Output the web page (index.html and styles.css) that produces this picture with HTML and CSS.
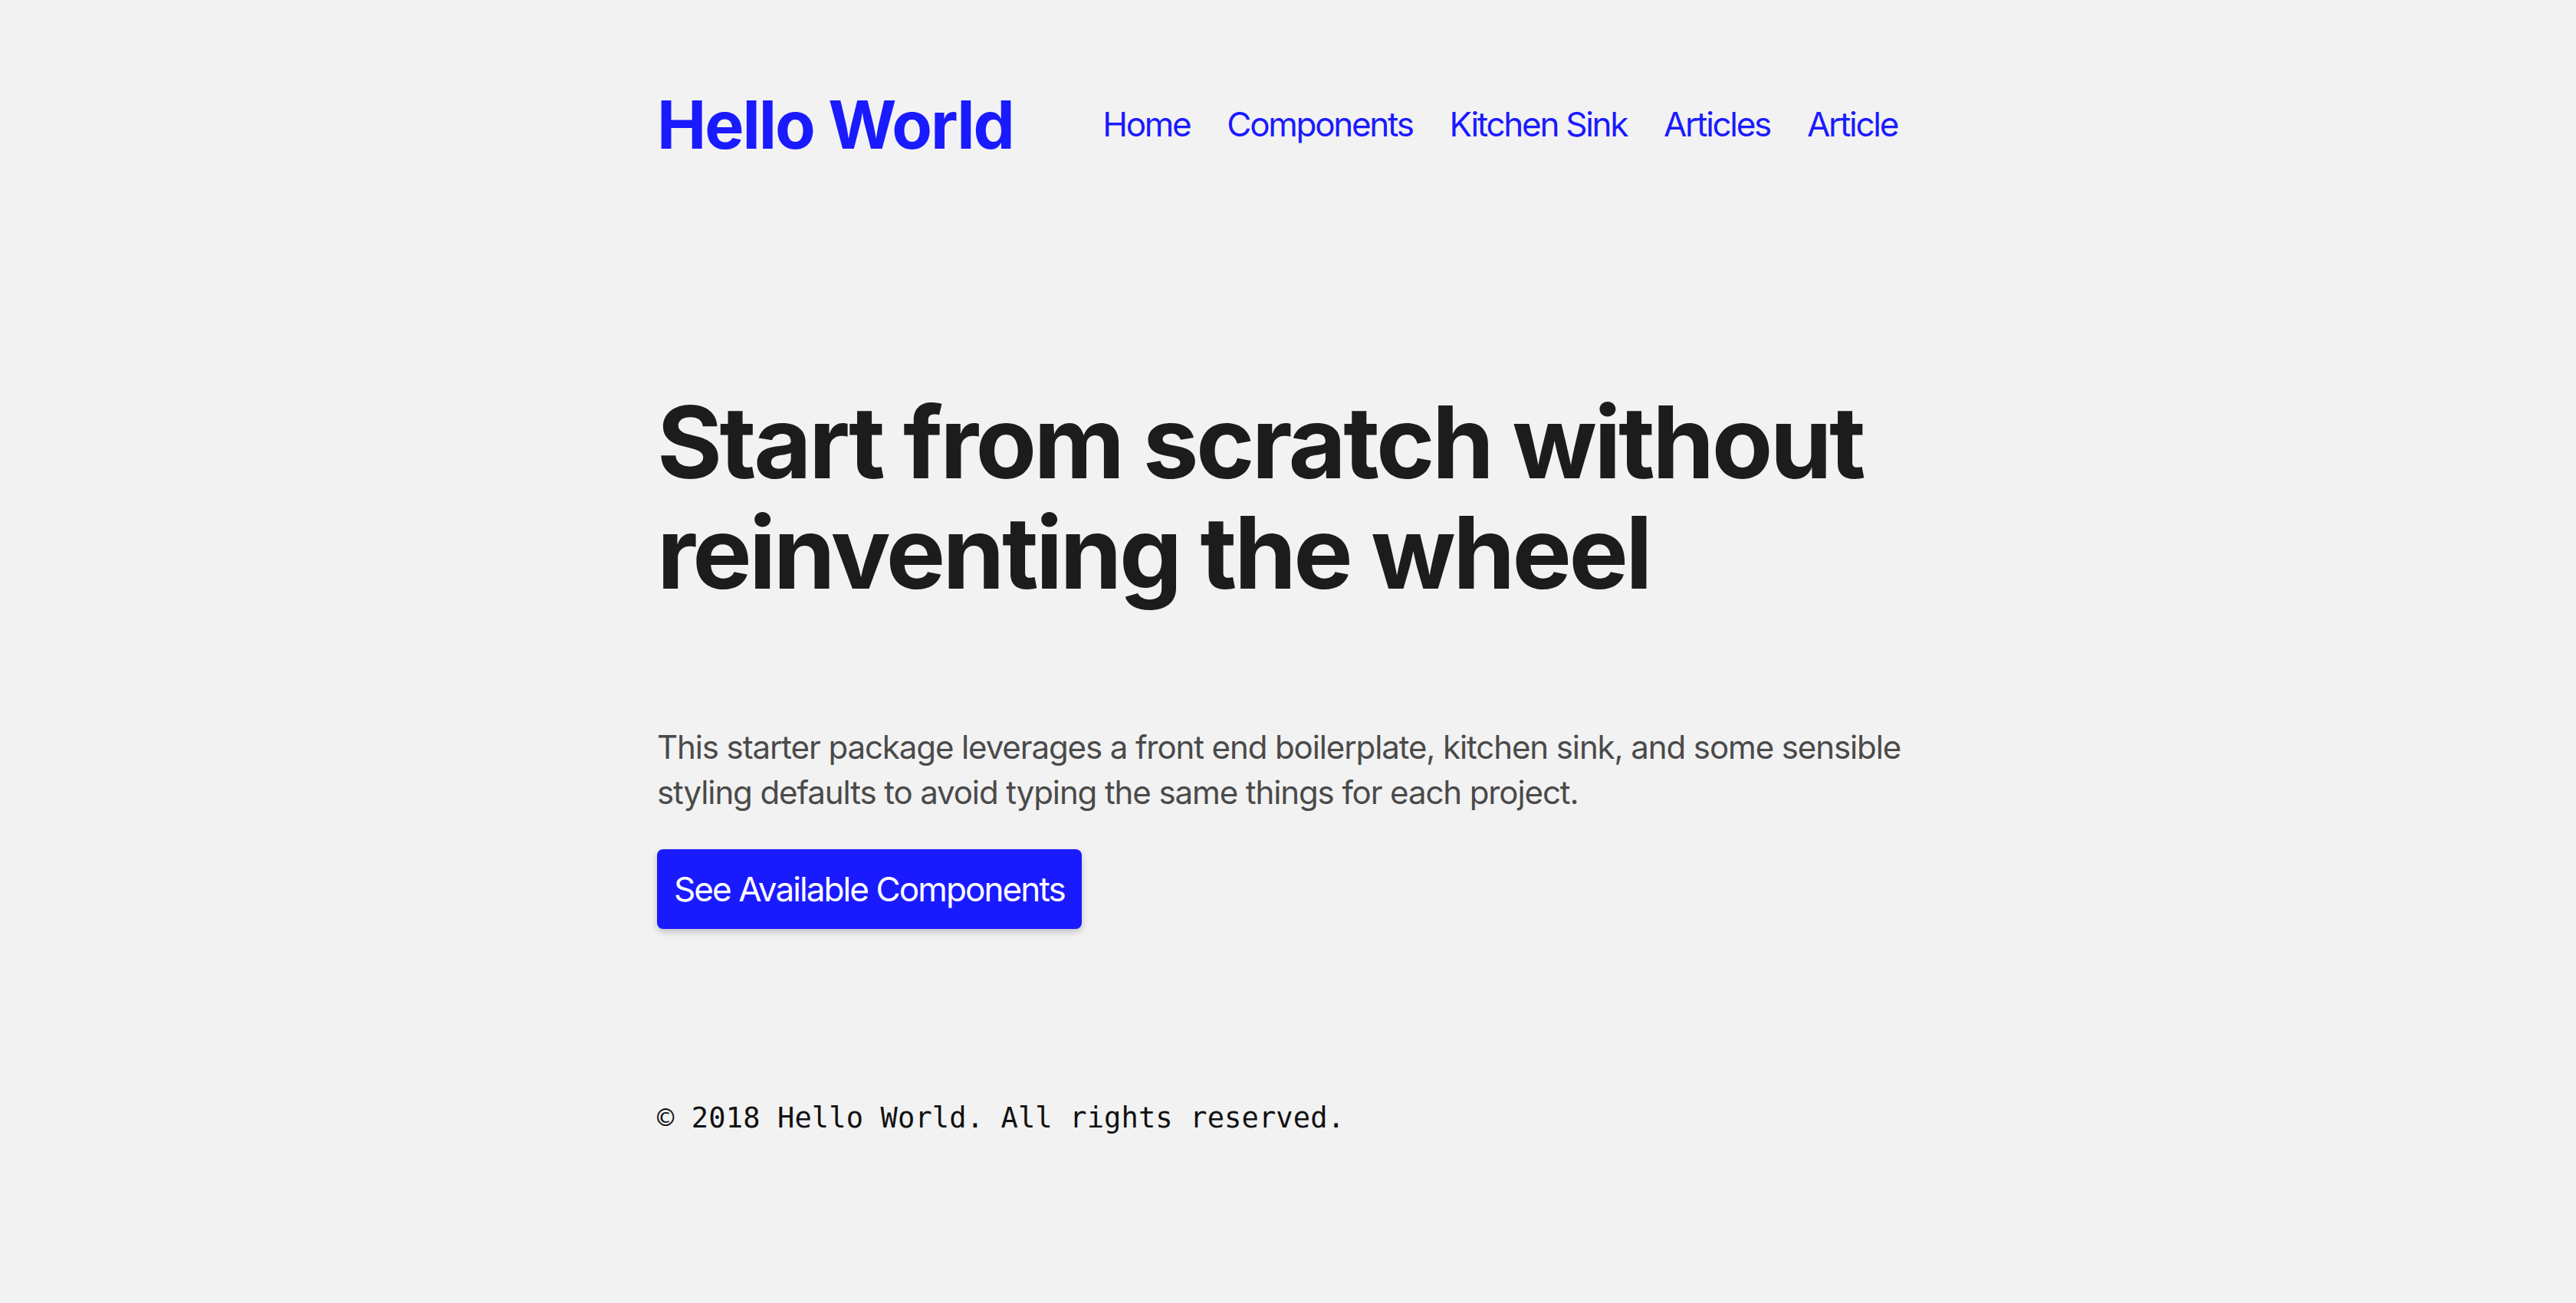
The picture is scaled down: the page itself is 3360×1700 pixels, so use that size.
FILE: index.html
```html
<!DOCTYPE html>
<html lang="en">
<head>
<meta charset="utf-8">
<title>Hello World</title>
<link rel="stylesheet" href="styles.css">
</head>
<body>
<div class="page">
  <header class="site-header">
    <a class="logo" href="#">Hello World</a>
    <nav class="nav">
      <a href="#">Home</a>
      <a href="#">Components</a>
      <a href="#">Kitchen Sink</a>
      <a href="#">Articles</a>
      <a href="#">Article</a>
    </nav>
  </header>
  <main class="hero">
    <h1 class="hero-title">Start from scratch without reinventing the wheel</h1>
    <p class="hero-text">This starter package leverages a front end boilerplate, kitchen sink, and some sensible styling defaults to avoid typing the same things for each project.</p>
    <div><a class="button" href="#">See Available Components</a></div>
  </main>
  <footer class="site-footer">© 2018 Hello World. All rights reserved.</footer>
</div>
</body>
</html>
```

FILE: styles.css
```css
html, body {
  margin: 0;
  padding: 0;
  background: #f2f2f2;
}
body {
  font-family: Inter, "Liberation Sans", sans-serif;
  color: #1c1c1c;
}
a { text-decoration: none; }
.page {
  width: 1646px;
  margin: 0 auto;
}
.site-header {
  display: flex;
  align-items: center;
  justify-content: space-between;
  padding-top: 112px;
}
.logo {
  font-size: 86px;
  line-height: 103px;
  font-weight: 700;
  color: #1a1aff;
  letter-spacing: -2px;
}
.nav {
  display: flex;
  margin-bottom: 3px;
  margin-right: 4px;
}
.nav a {
  font-size: 44px;
  line-height: 1.2;
  color: #1a1aff;
  padding: 0 24px;
  letter-spacing: -2.3px;
}
.hero {
  margin-top: 290px;
}
.hero-title {
  margin: 0;
  font-size: 130px;
  line-height: 144px;
  font-weight: 700;
  letter-spacing: -3.6px;
  color: #1c1c1c;
}
.hero-text {
  margin: 152px 0 0;
  font-size: 42px;
  line-height: 59px;
  color: #4a4a4a;
  letter-spacing: -1.1px;
}
.hero .button {
  display: inline-block;
  margin-top: 45px;
  background: #1a1aff;
  color: #fff;
  font-size: 44px;
  line-height: 52px;
  padding: 26px 22px;
  border-radius: 8px;
  box-shadow: 0 4px 8px rgba(0,0,0,0.2);
  letter-spacing: -1.9px;
}
.site-footer {
  margin-top: 219px;
  font-family: "DejaVu Sans Mono", "Liberation Mono", monospace;
  font-size: 37px;
  line-height: 55px;
  color: #111;
  letter-spacing: 0.15px;
}
```
